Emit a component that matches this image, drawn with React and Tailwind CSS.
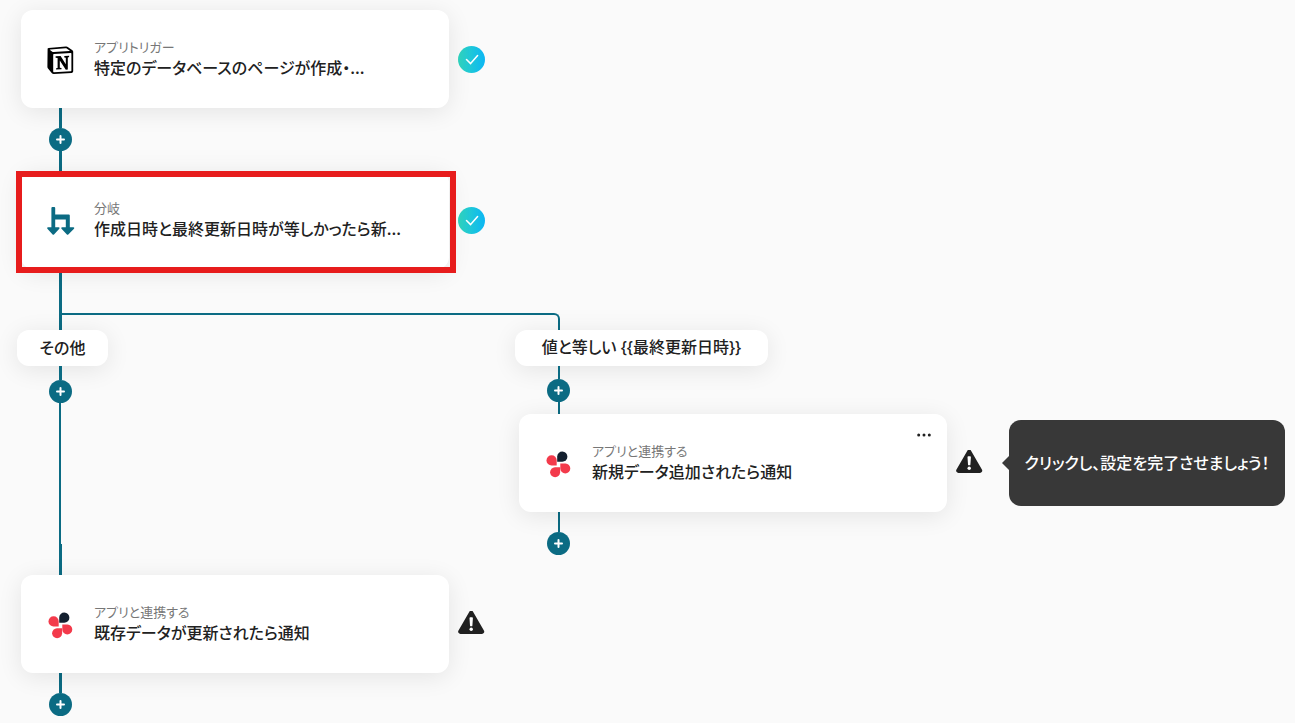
import React from 'react';

const NotionIcon = () => (
  <svg width="28" height="30" viewBox="1 -2 28 30" aria-hidden="true">
    <path d="M1.6 3.2C1.4 2.5 1.8 2 2.6 1.9L19.8.6c1-.1 1.6.1 2.3.6l4.3 3c.6.4.8.8.8 1.5v19.4c0 1.1-.5 1.7-1.6 1.8L7.6 28c-.9 0-1.4-.2-1.9-.9L2 22.4c-.4-.6-.6-1-.6-1.7Z" fill="#000" />
    <path d="M4.2 3.4 19.6 2.3c.7 0 .9.1 1.4.4l2.6 1.7c.3.3.3.5-.1.5L7.6 6.1c-.6 0-.9-.1-1.3-.4L4 3.9c-.3-.3-.2-.5.2-.5Z" fill="#fff" />
    <path d="M7.9 8 24.8 6.9c.4 0 .6.2.6.6v17c0 .5-.2.7-.6.7L7.9 26.2c-.5 0-.7-.2-.7-.7V8.7c0-.4.2-.7.7-.7Z" fill="#fff" />
    <path d="m9.6 10.3 5-.3 5.200 8.300v-6.600l-1.500-.3v-1.300l4.800-.3v1.300l-1.300.4v12l-2 .3-6-9.300v7.200l1.700.4v1.200l-5.400.3v-1.300l1.500-.4V11.900l-2-.2Z" fill="#000" />
  </svg>
);

const BranchIcon = () => (
  <svg width="28" height="30" viewBox="0 -2 28 30" fill="#0b6b83" aria-hidden="true">
    <path d="M5.4 0h1.8a1 1 0 0 1 1 1v6.600h13.600a1 1 0 0 1 1 1v11.600h3.500c.9 0 1.300.9.7 1.500l-5.700 5.800a1 1 0 0 1-1.400 0l-5.400-5.800c-.6-.6-.2-1.500.7-1.500h3.600v-7.600H8.200v7.600h3.400c.9 0 1.300.9.7 1.500l-5.300 5.800a1 1 0 0 1-1.400 0L.4 21.700c-.6-.6-.2-1.500.7-1.500h3.300V1a1 1 0 0 1 1-1Z" />
  </svg>
);

const FlowerIcon = () => (
  <svg width="28" height="30" viewBox="0 -2 28 30" aria-hidden="true">
    <path d="M12.2 11.7V6.5a5.100 5.100 0 1 1 5.100 5.200Z" fill="#14202f" />
    <path d="M11.700 15.500H6.600a5.100 5.100 0 1 1 5.100-5.100Z" fill="#f33a4b" />
    <path d="M15.300 13.400h5.200a5 5 0 1 1-5.200 5.100Z" fill="#f33a4b" />
    <path d="M15.100 17.200v5a5 5 0 1 1-5.100-5Z" fill="#f33a4b" />
  </svg>
);

const CheckBadge = () => (
  <span
    role="img"
    aria-label="完了"
    className="flex size-[27px] shrink-0 items-center justify-center rounded-full bg-linear-to-r from-[#31d5bd] to-[#0cb6f4]"
  >
    <svg width="27" height="27" viewBox="0 0 27 27" fill="none" stroke="#fff" strokeWidth="1.5" strokeLinecap="round" strokeLinejoin="round">
      <path d="m8.5 13.5 4.1 4.1 7-8.1" />
    </svg>
  </span>
);

const WarningBadge = () => (
  <svg width="27" height="27" viewBox="0 1 27 27" className="shrink-0" role="img" aria-label="警告">
    <path d="M11.2 1.9a2.3 2.3 0 0 1 4 0l10.7 18.6a2.3 2.3 0 0 1-2 3.5H2.5a2.3 2.3 0 0 1-2-3.5Z" fill="#212121" />
    <path d="M11.5 8.2c0-.6.5-1 1.100-1h1.200c.6 0 1.100.4 1.100 1l-.5 7.200c0 .5-.3.9-.8.9h-.8c-.5 0-.8-.4-.8-.9Z" fill="#fff" />
    <circle cx="13.2" cy="19.3" r="1.7" fill="#fff" />
  </svg>
);

const AddButton = () => (
  <button
    type="button"
    aria-label="ステップを追加"
    className="ml-7 flex size-[23px] shrink-0 items-center justify-center rounded-full bg-[#0b6b83]"
  >
    <svg width="9" height="9" viewBox="0 0 9 9" stroke="#fff" strokeWidth="2" strokeLinecap="round">
      <path d="M4.5 1v7M1 4.5h7" />
    </svg>
  </button>
);

const Line = ({ className }) => <div className={`shrink-0 bg-[#0b6b83] ${className}`} />;

const Step = ({ icon, label, title, status, menu, highlight, children }) => (
  <div className="flex items-center gap-[9px]">
    <article className="relative flex h-[98px] w-[428px] shrink-0 items-center rounded-xl bg-white pl-[26px] shadow-[0_4px_24px_rgba(0,0,0,0.09)]">
      {icon}
      <div className="ml-[19px] min-w-0">
        <p className="text-[13px] leading-4 text-[#777]">{label}</p>
        <h2 className="truncate text-[16px] leading-6 font-medium text-[#212121]">{title}</h2>
      </div>
      {menu && (
        <button type="button" aria-label="メニュー" className="absolute top-[15px] right-4 flex h-3 items-center">
          <svg width="14" height="4" viewBox="0 0 14 4" fill="#212121">
            <circle cx="1.7" cy="2" r="1.5" />
            <circle cx="7" cy="2" r="1.5" />
            <circle cx="12.3" cy="2" r="1.5" />
          </svg>
        </button>
      )}
      {highlight && (
        <div className="absolute top-0 -right-[7px] -bottom-1 -left-[5px] border-6 border-[#e71c1c]" />
      )}
    </article>
    {status}
    {children}
  </div>
);

const BranchLabel = ({ className, children }) => (
  <div
    className={`-ml-1 flex h-9 items-center justify-center rounded-xl bg-white pb-0.5 text-[16px] font-medium text-[#212121] shadow-[0_4px_24px_rgba(0,0,0,0.09)] ${className}`}
  >
    {children}
  </div>
);

const Tooltip = ({ children }) => (
  <div
    role="tooltip"
    className="relative ml-[17px] flex h-[86px] w-[276px] shrink-0 items-center justify-center rounded-xl bg-[#383838] pb-[3px] text-[16px] font-medium whitespace-nowrap text-white"
  >
    <svg width="7" height="14" viewBox="0 0 7 14" className="absolute top-9 -left-[7px]" fill="#383838" aria-hidden="true">
      <path d="M7 0v14L0 7Z" />
    </svg>
    {children}
  </div>
);

export default function App() {
  return (
    <main className="min-h-screen overflow-hidden bg-[#fafafa] pt-[10px] pb-[7px] pl-[21px] font-['Noto_Sans_CJK_JP',sans-serif] [font-feature-settings:'palt']">
      <Step
        icon={<NotionIcon />}
        label="アプリトリガー"
        title="特定のデータベースのページが作成・..."
        status={<CheckBadge />}
      />
      <Line className="ml-[38px] h-5 w-[3px]" />
      <AddButton />
      <Line className="ml-[38px] h-5 w-[3px]" />
      <Step
        icon={<BranchIcon />}
        label="分岐"
        title="作成日時と最終更新日時が等しかったら新..."
        status={<CheckBadge />}
        highlight
      />

      {/* Split into the two branches */}
      <div className="flex h-[61px] pl-[38px]">
        <Line className="h-full w-[3px]" />
        <div className="mt-11 w-[498px] rounded-tr-md border-t-2 border-r-2 border-[#0b6b83]" />
      </div>

      <div className="flex">
        <section className="flex w-[498px] shrink-0 flex-col">
          <BranchLabel className="w-[91px]">その他</BranchLabel>
          <Line className="ml-[38px] h-3.5 w-[3px]" />
          <AddButton />
          <div className="ml-[38px] w-0.5 grow bg-[#0b6b83]" />
          <Line className="ml-[38px] h-[31px] w-[3px]" />
        </section>
        <section className="pb-5">
          <BranchLabel className="w-[253px] font-['Noto_Sans','Noto_Sans_CJK_JP',sans-serif]">
            値と等しい {'{{最終更新日時}}'}
          </BranchLabel>
          <Line className="ml-[39px] h-[13px] w-0.5" />
          <AddButton />
          <Line className="ml-[39px] h-3 w-0.5" />
          <Step
            icon={<FlowerIcon />}
            label="アプリと連携する"
            title="新規データ追加されたら通知"
            status={<WarningBadge />}
            menu
          >
            <Tooltip>クリックし、設定を完了させましょう！</Tooltip>
          </Step>
          <Line className="ml-[39px] h-5 w-0.5" />
          <AddButton />
        </section>
      </div>

      <Step
        icon={<FlowerIcon />}
        label="アプリと連携する"
        title="既存データが更新されたら通知"
        status={<WarningBadge />}
      />
      <Line className="ml-[38px] h-5 w-[3px]" />
      <AddButton />
    </main>
  );
}
